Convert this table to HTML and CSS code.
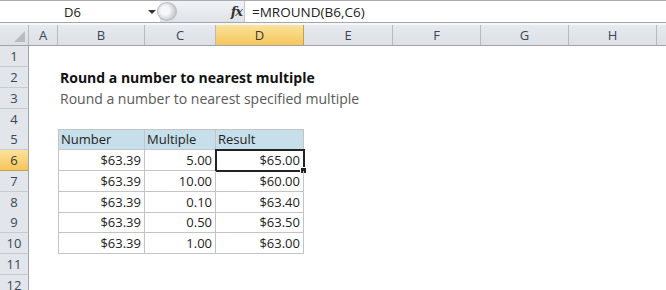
FILE: index.html
```html
<!DOCTYPE html>
<html>
<head>
<meta charset="utf-8">
<link rel="stylesheet" href="styles.css">
</head>
<body>
<div class="app">
  <div class="fbar">
    <div class="namebox"><span class="ref">D6</span><span class="dd"></span></div>
    <div class="mid"><span class="knob"></span><span class="fx">fx</span></div>
    <div class="formula">=MROUND(B6,C6)</div>
  </div>
  <div class="gap"></div>
  <div class="sheet">
    <div class="row colhead">
      <div class="corner"><span class="tri"></span></div>
      <div class="ch">A</div><div class="ch">B</div><div class="ch">C</div><div class="ch sel">D</div><div class="ch">E</div><div class="ch">F</div><div class="ch">G</div><div class="ch">H</div><div class="ch last"></div>
    </div>
    <div class="row h21"><div class="rh">1</div></div>
    <div class="row h21"><div class="rh">2</div><div class="title">Round a number to nearest multiple</div></div>
    <div class="row h21"><div class="rh">3</div><div class="sub">Round a number to nearest specified multiple</div></div>
    <div class="row h20"><div class="rh">4</div></div>
    <div class="row h21"><div class="rh">5</div><div class="c b th first">Number</div><div class="c cc th">Multiple</div><div class="c d th">Result</div></div>
    <div class="row h21"><div class="rh sel">6</div><div class="c b first">$63.39</div><div class="c cc">5.00</div><div class="c d active">$65.00<span class="handle"></span></div></div>
    <div class="row h21"><div class="rh">7</div><div class="c b first">$63.39</div><div class="c cc">10.00</div><div class="c d">$60.00</div></div>
    <div class="row h20"><div class="rh">8</div><div class="c b first">$63.39</div><div class="c cc">0.10</div><div class="c d">$63.40</div></div>
    <div class="row h21"><div class="rh">9</div><div class="c b first">$63.39</div><div class="c cc">0.50</div><div class="c d">$63.50</div></div>
    <div class="row h21"><div class="rh">10</div><div class="c b first">$63.39</div><div class="c cc">1.00</div><div class="c d">$63.00</div></div>
    <div class="row h21"><div class="rh">11</div></div>
    <div class="row h21"><div class="rh">12</div></div>
  </div>
</div>
</body>
</html>
```
FILE: styles.css
```css
* { box-sizing: border-box; }
html, body { margin: 0; padding: 0; background: #fff; }
body { font-family: "Open Sans", "Liberation Sans", sans-serif; width: 666px; height: 290px; overflow: hidden; }
.app { width: 666px; }

.fbar { display: flex; height: 23px; border-top: 1px solid #a9acb0; border-bottom: 1px solid #a3a6aa; }
.namebox { width: 160px; display: flex; align-items: center; position: relative; background: #fff; }
.ref { width: 145px; text-align: center; font-size: 13px; color: #222; }
.dd { width: 0; height: 0; border-left: 4px solid transparent; border-right: 4px solid transparent; border-top: 4px solid #333; margin-left: 3px; }
.mid { width: 85px; background: linear-gradient(#f1f3f6, #dfe3e8); display: flex; align-items: center; justify-content: flex-end; position: relative; border-right: 1px solid #c4c8cc; }
.knob { position: absolute; left: -3px; top: 1px; width: 20px; height: 19px; border-radius: 50%; background: radial-gradient(circle at 40% 45%, #f6f7f8 0 30%, #c5c9ce 70%); border: 1px solid #b9bcc0; }
.fx { font-family: "DejaVu Serif", "Liberation Serif", serif; font-style: italic; font-weight: bold; font-size: 13px; color: #333; margin-right: 2px; letter-spacing: -1px; }
.formula { flex: 1; background: #fff; font-size: 13.5px; color: #222; padding-left: 7px; display: flex; align-items: center; }

.gap { height: 2px; background: #f6f7f8; }

.sheet { font-size: 13px; }
.row { display: grid; grid-template-columns: 29px 29px 87px 71px 88px 89px 88px 88px 88px 1fr; }
.h21 { height: 21px; }
.h20 { height: 20px; }
.colhead { height: 21px; background: linear-gradient(#e6e9ed, #dde1e6); border-bottom: 1px solid #9fa4aa; }
.corner { border-right: 1px solid #b6bbc1; position: relative; }
.tri { position: absolute; right: 3px; bottom: 3px; width: 0; height: 0; border-left: 11px solid transparent; border-bottom: 11px solid #b9bdc2; }
.ch { border-right: 1px solid #b6bbc1; text-align: center; line-height: 20px; color: #3a4556; }
.ch.sel { background: linear-gradient(#fbe29b, #f5c65b); color: #3a3a3a; border-right-color: #c2a04e; }
.ch.last { border-right: none; }

.rh { grid-column: 1; background: #e2e6eb; border-right: 1px solid #9fa4aa; border-bottom: 1px solid #c6cbd1; text-align: center; line-height: 20px; color: #3a4556; font-size: 13px; }
.rh.sel { background: linear-gradient(#fbe29b, #f5c65b); color: #3a3a3a; border-bottom-color: #c2a04e; }

.title { grid-column: 3 / span 5; font-weight: bold; color: #111; line-height: 21px; padding-left: 2px; white-space: nowrap; font-size: 14px; }
.sub { grid-column: 3 / span 5; color: #595959; line-height: 21px; padding-left: 2px; white-space: nowrap; font-size: 14px; }

.c { border-right: 1px solid #c4c4c4; border-bottom: 1px solid #c4c4c4; line-height: 20px; text-align: right; padding-right: 3px; color: #222; position: relative; white-space: nowrap; }
.c.first { border-left: 1px solid #c4c4c4; }
.c.b { grid-column: 3; }
.c.cc { grid-column: 4; }
.c.d { grid-column: 5; }
.c.th { background: #c7dfeb; text-align: left; padding-left: 2px; border-top: 1px solid #c4c4c4; line-height: 19px; }
.c.active { outline: 2px solid #222; outline-offset: -1px; }
.handle { position: absolute; right: -4px; bottom: -4px; width: 5px; height: 5px; background: #222; border: 1px solid #fff; box-sizing: content-box; }
```
